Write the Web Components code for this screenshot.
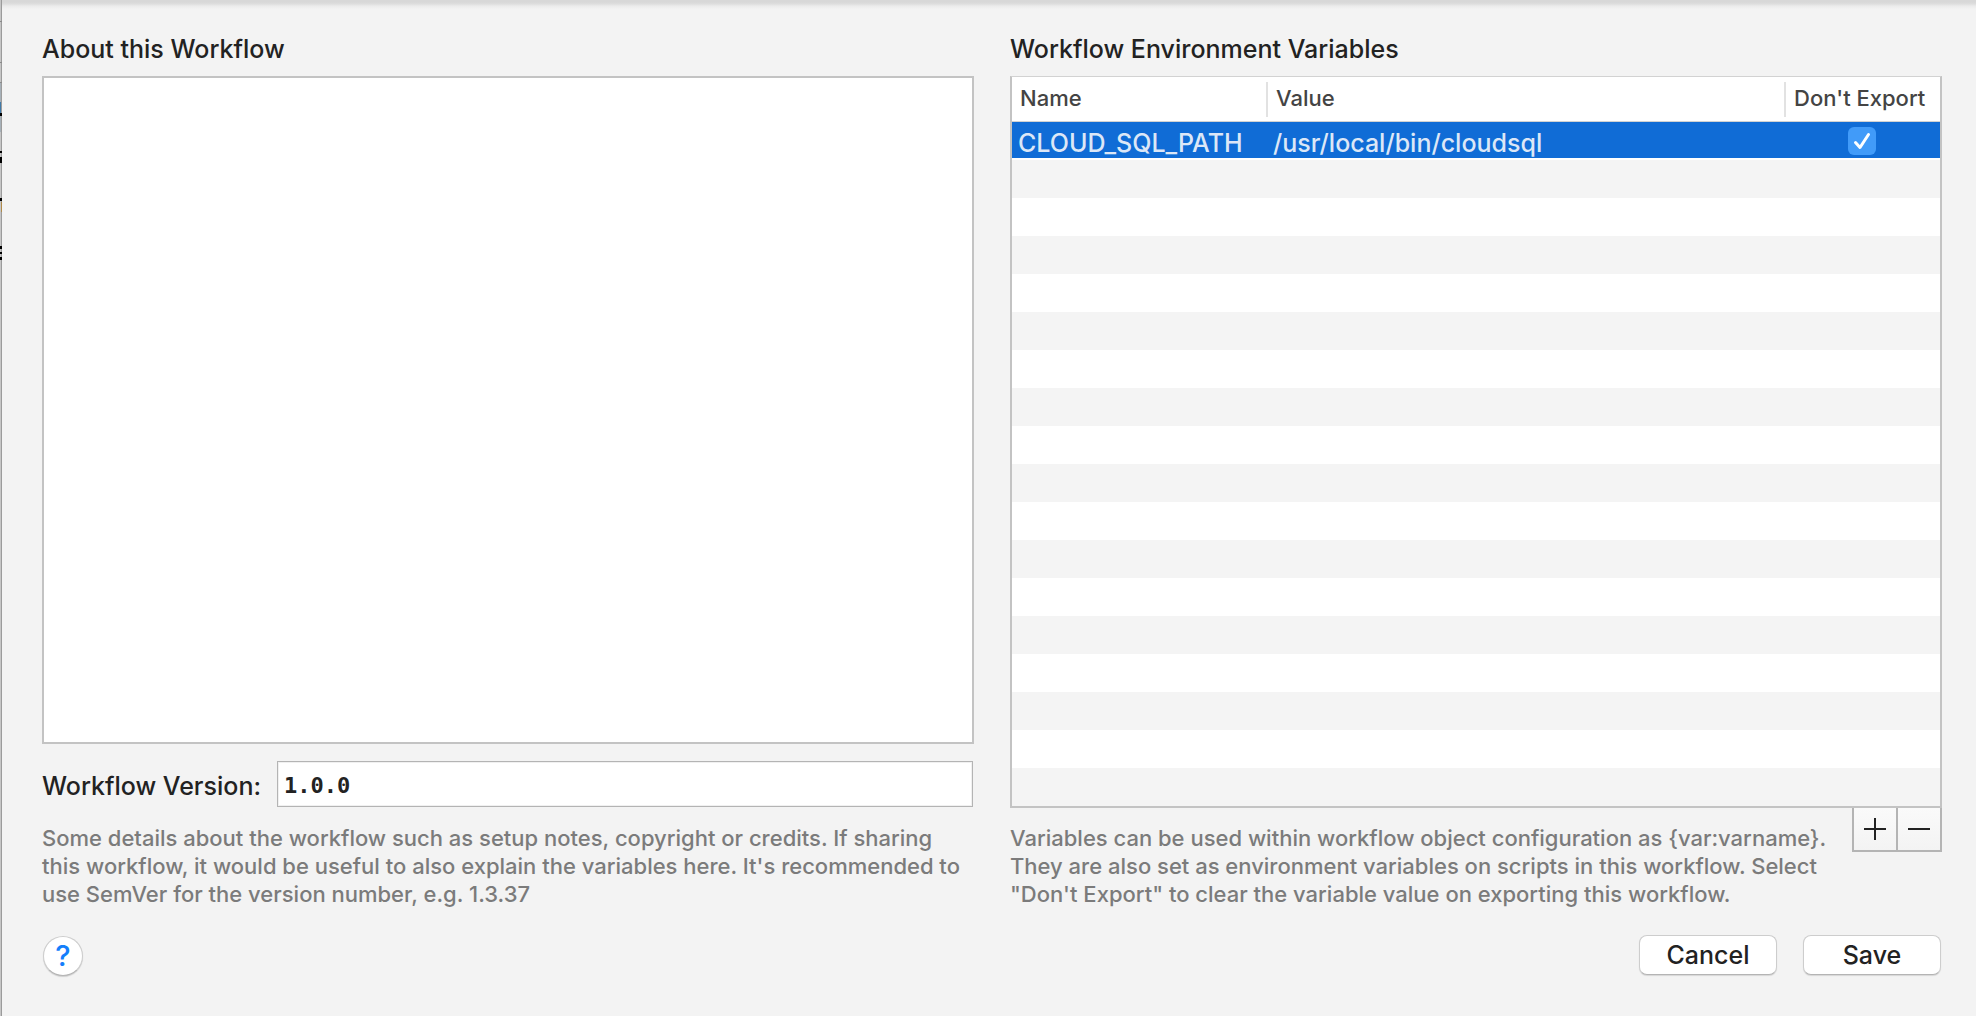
<!DOCTYPE html>
<html lang="en">
<head>
<meta charset="utf-8">
<title>Workflow Environment Variables</title>
<style>
  html { height: 100%; }
  body { margin: 0; min-height: 100%; display: flex; background: #f3f3f3; font: 500 25px/32px Inter, sans-serif; color: #222; }
  workflow-sheet { flex: 1; }
</style>
</head>
<body>
<window-edge></window-edge>
<workflow-sheet>
  <about-panel slot="about"></about-panel>
  <variables-panel slot="variables"></variables-panel>
  <help-button slot="footer"></help-button>
  <push-button slot="footer">Cancel</push-button>
  <push-button slot="footer">Save</push-button>
</workflow-sheet>
<script>
const define = (name, html) => customElements.define(name, class extends HTMLElement {
  constructor() {
    super();
    this.attachShadow({ mode: "open" }).innerHTML = html;
  }
});

/* Sliver of the window behind the sheet */
define("window-edge", `
<style>
  :host { display: block; flex: none; width: 2px; background: linear-gradient(90deg, #c6c6c6 1px, #9b9b9b 1px); }
  svg { display: block; }
</style>
<svg width="2" height="280" viewBox="0 0 2 280" shape-rendering="crispEdges" aria-hidden="true">
  <path fill="#8a8a8a" d="M0 21h2v1H0zM0 62h2v1H0zM0 82h2v1H0z"/>
  <path fill="#a6b0b8" d="M0 83h1v49H0z"/>
  <path fill="#3f79a8" d="M0 102h1v11H0z"/>
  <path fill="#b08a4a" d="M1 202h1v10H1z"/>
  <path fill="#000" d="M0 113h2v3H0zM0 151h2v2H0zM0 157h2v6H0zM0 198h2v3H0zM0 246h2v3H0zM0 252h2v2H0zM0 257h2v3H0z"/>
</svg>`);

define("workflow-sheet", `
<style>
  :host { display: flex; flex-direction: column; padding: 33px 34px 39px 40px; box-sizing: border-box;
    background: linear-gradient(#d8d8d8 0, #d8d8d8 2px, #dedede 4px, #ebebeb 6px, #f3f3f3 9px); }
  main { flex: 1; display: grid; grid-template-columns: 1fr 1fr; gap: 36px; }
  footer { display: flex; gap: 26px; padding: 27px 1px 0 0; }
  ::slotted(help-button) { margin-right: auto; }
</style>
<main><slot name="about"></slot><slot name="variables"></slot></main>
<footer><slot name="footer"></slot></footer>`);

define("about-panel", `
<style>
  :host { display: flex; flex-direction: column; min-width: 0; }
  textarea { flex: 1; margin: 11px 0 17px; box-sizing: border-box; width: 100%; border: 2px solid #c3c3c3;
    background: #fff; resize: none; padding: 8px; font: inherit; outline: 0; }
  .version { display: flex; align-items: center; gap: 16px; margin-right: 1px; }
  .version label { padding-top: 4px; }
  input { flex: 1; min-width: 0; height: 46px; box-sizing: border-box; border: 1px solid #b4b4b4; background: #fff;
    box-shadow: inset 0 0 0 1px #f0f0f0; padding: 2px 6px 0; font: bold 22px/28px "DejaVu Sans Mono", monospace; color: #222; outline: 0; }
  p { margin: 17px 0 0; font-size: 22px; font-weight: 450; line-height: 28px; color: #7b7b7b; }
</style>
<label for="about">About this Workflow</label>
<textarea id="about"></textarea>
<div class="version"><label for="version">Workflow Version:</label><input id="version" value="1.0.0"></div>
<p>Some details about the workflow such as setup notes, copyright or credits. If sharing<br>this workflow, it would be useful to also explain the variables here. It's recommended to<br>use SemVer for the version number, e.g. 1.3.37</p>`);

define("variables-panel", `
<style>
  :host { display: flex; flex-direction: column; min-width: 0; }
  h2 { margin: 0 0 11px; font: inherit; }
  .box { flex: 1; border: 2px solid #c3c3c3; border-top: 1px solid #d2d2d2;
    background: repeating-linear-gradient(#fff 0 38px, #f4f4f4 38px 76px) 0 45px no-repeat #fff; }
  table { width: 100%; border-collapse: collapse; table-layout: fixed; }
  th { height: 44px; padding: 0; background: #fff; text-align: left; font-size: 22px; font-weight: 500; line-height: 26px; color: #444; border-bottom: 1px solid #d2d2d2; }
  th span { display: block; padding: 3px 0 6px 8px; border-left: 2px solid #e2e2e2; white-space: nowrap; }
  th:first-child span { border-left-color: #fff; padding-left: 6px; }
  td { height: 30px; padding: 6px 0 0 7px; background: #106cd6; color: #dce7f7; white-space: nowrap; font-weight: 450; line-height: 30px; }
  td:first-child { padding-left: 6px; }
  td:last-child { padding: 2px 0 0; }
  .name { width: 254px; }
  .export { width: 156px; }
  input { appearance: none; margin: 0; width: 28px; height: 28px; border-radius: 6px; background: #419bf9; }
  .check { display: grid; place-items: center; }
  .check > * { grid-area: 1 / 1; }
  .check svg { z-index: 1; pointer-events: none; }
  .below { display: flex; justify-content: space-between; align-items: flex-start; height: 100px; }
  p { margin: 16px 0 0; font-size: 22px; font-weight: 450; line-height: 28px; color: #7b7b7b; }
  .tools { display: flex; border: solid #b4b4b4; border-width: 0 2px 2px; }
  button { width: 42px; height: 42px; padding: 0; border: 0; background: linear-gradient(#fafafa, #f3f3f3); display: grid; place-items: center; }
  button + button { width: 44px; border-left: 2px solid #b4b4b4; }
</style>
<h2>Workflow Environment Variables</h2>
<div class="box">
  <table>
    <thead><tr><th class="name"><span>Name</span></th><th><span>Value</span></th><th class="export"><span>Don't Export</span></th></tr></thead>
    <tbody><tr><td>CLOUD_SQL_PATH</td><td>/usr/local/bin/cloudsql</td><td><div class="check"><input type="checkbox" checked aria-label="Don't Export"><svg width="28" height="28" viewBox="0 0 28 28" fill="none" stroke="#fff" stroke-width="3" stroke-linecap="round" stroke-linejoin="round" aria-hidden="true"><path d="M7.500 15.500 12 20.500 20.500 7.500"/></svg></div></td></tr></tbody>
  </table>
</div>
<div class="below">
  <p>Variables can be used within workflow object configuration as {var:varname}.<br>They are also set as environment variables on scripts in this workflow. Select<br>"Don't Export" to clear the variable value on exporting this workflow.</p>
  <div class="tools">
    <button type="button" aria-label="Add variable"><svg width="22" height="22" viewBox="0 0 22 22"><path fill="#222" d="M10 0h2v10h10v2H12v10h-2V12H0v-2h10z"/></svg></button>
    <button type="button" aria-label="Remove variable"><svg width="22" height="22" viewBox="0 0 22 22"><path fill="#222" d="M0 10h22v2H0z"/></svg></button>
  </div>
</div>`);

define("push-button", `
<style>
  :host { display: block; }
  button { width: 138px; height: 40px; padding: 0; border: 1px solid #cdcdcd; border-bottom-color: #b4b4b4; border-radius: 8px;
    background: #fff; box-shadow: 0 1px 1px #0000001f; font: inherit; line-height: 36px; color: #222; display: block; }
</style>
<button type="button"><slot></slot></button>`);

define("help-button", `
<style>
  :host { display: block; }
  button { width: 40px; height: 40px; margin: 1px; padding: 0; border: 1px solid #cdcdcd; border-bottom-color: #b4b4b4; border-radius: 50%;
    background: #fff; box-shadow: 0 1px 1px #00000026; font: 500 29px/36px Inter, sans-serif; color: #147efb; display: block; }
</style>
<button type="button">?</button>`);
</script>
</body>
</html>
